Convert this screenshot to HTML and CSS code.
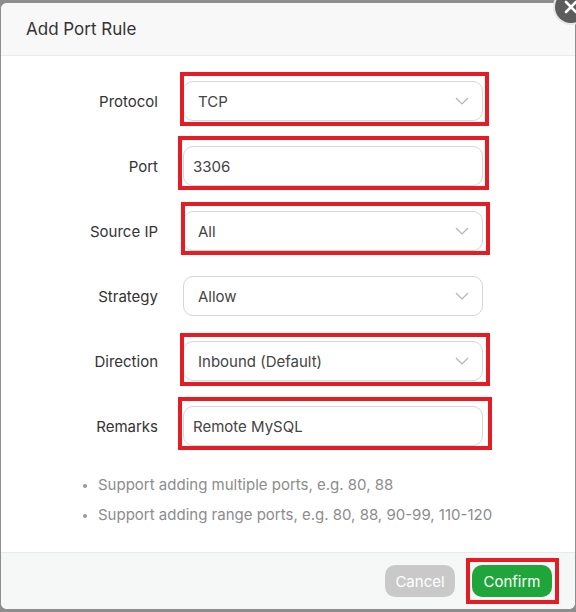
FILE: index.html
```html
<!DOCTYPE html>
<html>
<head>
<meta charset="utf-8">
<link rel="stylesheet" href="styles.css">
</head>
<body>
<div class="dialog">
  <div class="header">Add Port Rule</div>
  <span class="close"><svg width="14" height="14" viewBox="0 0 14 14"><path d="M2 2 L12 12 M12 2 L2 12" stroke="#fff" stroke-width="2.6" stroke-linecap="round"/></svg></span>
  <div class="body">
    <div class="form">
      <label class="label">Protocol</label>
      <div class="hl hl-protocol"><div class="field select"><span>TCP</span><svg class="chev" width="14" height="8" viewBox="0 0 14 8"><polyline points="1,1 7,7 13,1" fill="none" stroke="#b4b4b4" stroke-width="1.2"/></svg></div></div>

      <label class="label">Port</label>
      <div class="hl hl-port"><div class="field input"><span>3306</span></div></div>

      <label class="label">Source IP</label>
      <div class="hl hl-source"><div class="field select"><span>All</span><svg class="chev" width="14" height="8" viewBox="0 0 14 8"><polyline points="1,1 7,7 13,1" fill="none" stroke="#b4b4b4" stroke-width="1.2"/></svg></div></div>

      <label class="label">Strategy</label>
      <div class="hl"><div class="field select"><span>Allow</span><svg class="chev" width="14" height="8" viewBox="0 0 14 8"><polyline points="1,1 7,7 13,1" fill="none" stroke="#b4b4b4" stroke-width="1.2"/></svg></div></div>

      <label class="label">Direction</label>
      <div class="hl hl-direction"><div class="field select"><span>Inbound (Default)</span><svg class="chev" width="14" height="8" viewBox="0 0 14 8"><polyline points="1,1 7,7 13,1" fill="none" stroke="#b4b4b4" stroke-width="1.2"/></svg></div></div>

      <label class="label">Remarks</label>
      <div class="hl hl-remarks"><div class="field input"><span>Remote MySQL</span></div></div>
    </div>
    <ul class="tips">
      <li>Support adding multiple ports, e.g. 80, 88</li>
      <li>Support adding range ports, e.g. 80, 88, 90-99, 110-120</li>
    </ul>
  </div>
  <div class="footer">
    <button class="btn cancel">Cancel</button>
    <span class="hl hl-confirm"><button class="btn confirm">Confirm</button></span>
  </div>
</div>
</body>
</html>
```

FILE: styles.css
```css
html, body {
  margin: 0;
  padding: 0;
}
body {
  background: #8e8e8e;
  width: 576px;
  height: 612px;
  overflow: hidden;
  font-family: Inter, "Liberation Sans", Arial, sans-serif;
  padding: 3px 0 0 1px;
  box-sizing: border-box;
}
.dialog {
  position: relative;
  width: 574px;
  height: 606px;
  background: #fff;
  border-radius: 6px;
  display: flex;
  flex-direction: column;
}
.header {
  height: 53px;
  box-sizing: border-box;
  background: #f8f8f8;
  border-bottom: 1px solid #ebebeb;
  border-radius: 6px 6px 0 0;
  padding-left: 25px;
  display: flex;
  align-items: center;
  font-size: 17px;
  color: #333;
}
.close {
  position: absolute;
  top: -12px;
  right: -12px;
  width: 32px;
  height: 32px;
  border-radius: 50%;
  background: #5c5c5c;
  box-shadow: 0 0 0 2px #e6e6e6;
  display: flex;
  align-items: center;
  justify-content: center;
}
.body {
  flex: 1;
  padding-top: 25px;
}
.form {
  display: grid;
  grid-template-columns: 157px 300px;
  column-gap: 25px;
  row-gap: 25px;
  align-items: center;
}
.label {
  text-align: right;
  font-size: 15px;
  color: #333;
}
.hl {
  position: relative;
  display: block;
}
.hl-protocol::after,
.hl-port::after,
.hl-source::after,
.hl-direction::after,
.hl-remarks::after,
.hl-confirm::after {
  content: "";
  position: absolute;
  border: 4px solid #e41c23;
  pointer-events: none;
}
.hl-protocol::after { top: -9px; left: -3px; right: -6px; bottom: -5px; }
.hl-port::after { top: -10px; left: -5px; right: -6px; bottom: -4px; }
.hl-source::after { top: -9px; left: -2px; right: -7px; bottom: -4px; }
.hl-direction::after { top: -8px; left: -3px; right: -7px; bottom: -5px; }
.hl-remarks::after { top: -9px; left: -5px; right: -9px; bottom: -4px; }
.hl-confirm::after { top: -7px; left: -6px; right: -7px; bottom: -7px; }
.field {
  height: 40px;
  box-sizing: border-box;
  border: 1px solid #d6d6d6;
  border-radius: 10px;
  background: #fff;
  display: flex;
  align-items: center;
  justify-content: space-between;
  font-size: 15px;
  color: #444;
}
.select {
  padding: 0 13px 0 14px;
}
.input {
  padding: 0 10px 0 9px;
}
.chev {
  display: block;
}
.tips {
  margin: 24px 0 0 0;
  padding: 0 0 0 97px;
  list-style: disc;
  color: #8c8c8c;
  font-size: 15px;
  line-height: 30px;
}
.tips li::marker {
  color: #999;
  font-size: 12px;
}
.footer {
  height: 57px;
  box-sizing: border-box;
  background: #f6f7f7;
  border-top: 1px solid #e9e9e9;
  border-radius: 0 0 6px 6px;
  display: flex;
  align-items: center;
  justify-content: flex-end;
  gap: 17px;
  padding-right: 23px;
}
.btn {
  height: 32px;
  border: none;
  border-radius: 10px;
  font-family: Inter, "Liberation Sans", Arial, sans-serif;
  font-size: 15px;
  color: #fff;
  padding: 0;
  display: block;
}
.cancel {
  width: 70px;
  background: #c9c9c9;
}
.confirm {
  width: 80px;
  background: #20a53a;
}
```
